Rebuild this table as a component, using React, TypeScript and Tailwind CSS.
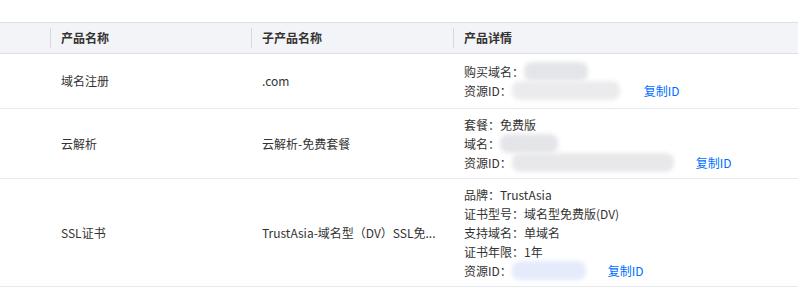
import React from 'react';

interface Row {
    name: string;
    sub: string;
    details: React.ReactNode[];
    minH?: string;
}

const font = { fontFamily: '"Noto Sans CJK SC", "Liberation Sans", sans-serif' };

// blurred placeholder for masked values
const Masked: React.FC<{ w: string; tone?: string }> = ({ w, tone = 'bg-[#e4e5e8]' }) => (
    <span className={`inline-block h-[19px] ${w} ${tone} rounded-[8px] blur-[2px] align-middle`} />
);

const CopyId: React.FC<{ ml: string }> = ({ ml }) => (
    <a className={`${ml} text-[#006eff] cursor-pointer`}>复制ID</a>
);

const rows: Row[] = [
    {
        name: '域名注册',
        sub: '.com',
        minH: 'min-h-[55px]',
        details: [
            <span className="flex items-center">购买域名：<Masked w="w-[64px]" /></span>,
            <span className="flex items-center">资源ID：<Masked w="w-[108px]" tone="bg-[#ebebed]" /><CopyId ml="ml-6" /></span>,
        ],
    },
    {
        name: '云解析',
        sub: '云解析-免费套餐',
        details: [
            <span>套餐：免费版</span>,
            <span className="flex items-center">域名：<Masked w="w-[58px]" /></span>,
            <span className="flex items-center">资源ID：<Masked w="w-[162px]" tone="bg-[#e8e8ea]" /><CopyId ml="ml-[22px]" /></span>,
        ],
    },
    {
        name: 'SSL证书',
        sub: 'TrustAsia-域名型（DV）SSL免...',
        details: [
            <span>品牌：TrustAsia</span>,
            <span>证书型号：域名型免费版(DV)</span>,
            <span>支持域名：单域名</span>,
            <span>证书年限：1年</span>,
            <span className="flex items-center">资源ID：<Masked w="w-[74px]" tone="bg-[#e6ebfb]" /><CopyId ml="ml-[22px]" /></span>,
        ],
    },
];

const cols = 'grid grid-cols-[50px_201px_202px_1fr]';

const App: React.FC = () => {
    return (
        <div className="w-[798px] h-[305px] bg-white text-[12px] text-[#333] overflow-hidden" style={font}>
            <div className="h-[22px]" />
            <div className={`${cols} h-[32px] bg-[#f3f4f7] border-y border-[#dcdfe6] font-bold`}>
                <div />
                {['产品名称', '子产品名称', '产品详情'].map(title => (
                    <div key={title} className="flex items-center">
                        <span className="w-px h-[20px] bg-[#d5d8de]" />
                        <span className="pl-[10px]">{title}</span>
                    </div>
                ))}
            </div>
            {rows.map(row => (
                <div key={row.name} className={`${cols} ${row.minH ?? ''} border-b border-[#e6e9ef]`}>
                    <div />
                    <div className="flex items-center pl-[11px]">{row.name}</div>
                    <div className="flex items-center pl-[11px] pr-2 whitespace-nowrap">{row.sub}</div>
                    <div className="flex flex-col justify-center pl-[11px] py-[6px] leading-[19px]">
                        {row.details.map((d, i) => (
                            <div key={i} className="h-[19px] flex items-center">{d}</div>
                        ))}
                    </div>
                </div>
            ))}
        </div>
    );
};

export default App;
